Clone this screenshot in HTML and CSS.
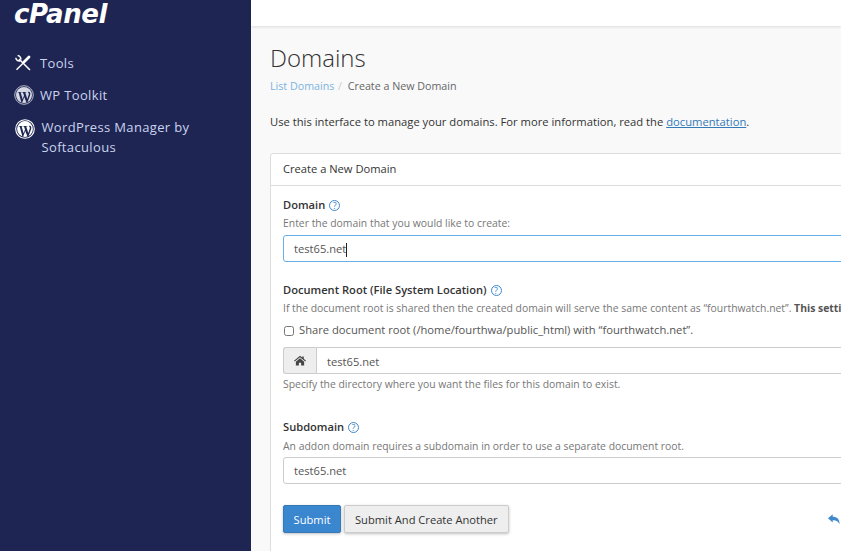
FILE: index.html
```html
<!DOCTYPE html>
<html lang="en">

<head>
    <meta charset="UTF-8">
    <meta name="viewport" content="width=device-width, initial-scale=1.0">
    <title>Domains</title>
    <link rel="stylesheet" href="styles.css">
</head>

<body>

    <aside class="sidebar">
        <div class="logo">cPanel</div>
        <nav class="sideNav">
            <a class="navItem toolsItem" href="#">
                <svg class="navIcon" viewBox="0 0 18 18" width="18" height="18">
                    <path d="M5 5 L16 16" fill="none" stroke="#fff" stroke-width="1.500"/>
                    <path d="M1.800 3.800 A3.400 3.400 0 0 0 6.200 6.800 M3.600 1.600 A3.400 3.400 0 0 1 6.800 5.600" fill="none" stroke="#fff" stroke-width="1.500"/>
                    <path d="M2.500 15.800 L10 8.300" fill="none" stroke="#fff" stroke-width="1.500"/>
                    <path d="M10 8 L15 3" fill="none" stroke="#fff" stroke-width="2.800" stroke-linecap="round"/>
                </svg>
                <span>Tools</span>
            </a>
            <a class="navItem" href="#">
                <svg class="navIcon" viewBox="0 0 20 20" width="20" height="20">
                    <circle cx="10" cy="10" r="9.300" fill="none" stroke="#b9bccb" stroke-width="1"/>
                    <circle cx="10" cy="10" r="8" fill="#d5d7e2"/>
                    <path d="M3.800 7 H7.500 V7.600 H6.600 L8.700 14.200 L10 10.400 L9 7.600 H8.300 V7 H12.300 V7.600 H11.200 L13.300 14 L14.800 9.600 C15.200 8.400 14.300 8 14 7 C14.200 6.500 15 6.600 15.600 7 C16.500 7.800 16.500 9 16 10.500 L13.200 18 H12.600 L10.300 12 L8 18 H7.500 L4.700 7.600 H3.800 Z" fill="#1f2553"/>
                </svg>
                <span>WP Toolkit</span>
            </a>
            <a class="navItem navItemTall" href="#">
                <svg class="navIcon" viewBox="0 0 20 20" width="20" height="20">
                    <circle cx="10" cy="10" r="9.300" fill="none" stroke="#fff" stroke-width="1.100"/>
                    <circle cx="10" cy="10" r="7.900" fill="#fff"/>
                    <path d="M3.800 7 H7.500 V7.600 H6.600 L8.700 14.200 L10 10.400 L9 7.600 H8.300 V7 H12.300 V7.600 H11.200 L13.300 14 L14.800 9.600 C15.200 8.400 14.300 8 14 7 C14.200 6.500 15 6.600 15.600 7 C16.500 7.800 16.500 9 16 10.500 L13.200 18 H12.600 L10.300 12 L8 18 H7.500 L4.700 7.600 H3.800 Z" fill="#1f2553"/>
                </svg>
                <span>WordPress Manager by Softaculous</span>
            </a>
        </nav>
    </aside>

    <div class="main">
        <header class="topBar"></header>

        <div class="content">
            <h1>Domains</h1>
            <div class="crumbs">
                <a href="#">List Domains</a>
                <span class="sep">/</span>
                <span>Create a New Domain</span>
            </div>

            <p class="intro">Use this interface to manage your domains. For more information, read the <a href="#">documentation</a>.</p>

            <section class="card">
                <div class="cardHead">Create a New Domain</div>
                <div class="cardBody">

                    <div class="field">
                        <label class="fieldLabel">Domain <span class="help">?</span></label>
                        <p class="hint">Enter the domain that you would like to create:</p>
                        <div class="textBox focused">test65.net<span class="caret"></span></div>
                    </div>

                    <div class="field rootField">
                        <label class="fieldLabel">Document Root (File System Location) <span class="help">?</span></label>
                        <p class="hint nowrap">If the document root is shared then the created domain will serve the same content as “fourthwatch.net”. <b>This setting cannot be changed</b></p>
                        <label class="shareRow">
                            <input type="checkbox">
                            <span>Share document root (/home/fourthwa/public_html) with “fourthwatch.net”.</span>
                        </label>
                        <div class="inputGroup">
                            <span class="addon">
                                <svg viewBox="0 0 16 14" width="12" height="11">
                                    <path d="M8 0.500 L11 3 V1.500 H13 V4.700 L16 7.300 L15 8.400 L8 2.500 L1 8.400 L0 7.300 Z M2.500 8.500 L8 4 L13.500 8.500 V13.500 H9.500 V10 H6.500 V13.500 H2.500 Z" fill="#444"/>
                                </svg>
                            </span>
                            <div class="textBox groupBox">test65.net</div>
                        </div>
                        <p class="hint afterBox">Specify the directory where you want the files for this domain to exist.</p>
                    </div>

                    <div class="field subField">
                        <label class="fieldLabel">Subdomain <span class="help">?</span></label>
                        <p class="hint">An addon domain requires a subdomain in order to use a separate document root.</p>
                        <div class="textBox">test65.net</div>
                    </div>

                    <div class="actions">
                        <button class="btn primary">Submit</button>
                        <button class="btn">Submit And Create Another</button>
                        <svg class="backIcon" viewBox="0 0 14 12" width="12" height="11">
                            <path d="M0 4.500 L5.500 0 V2.800 C10.500 2.800 13.500 5 13.500 11.500 C12 8 10 6.800 5.500 6.800 V9.500 Z" fill="#3f88cc"/>
                        </svg>
                    </div>

                </div>
            </section>
        </div>
    </div>

</body>

</html>
```

FILE: styles.css
```css
* {
    margin: 0;
    padding: 0;
    box-sizing: border-box;
}

html,
body {
    height: 100%;
    overflow: hidden;
}

body {
    display: flex;
    font-family: "Open Sans", sans-serif;
    font-size: 11.150px;
    color: #333;
    background: #f9f9f9;
}

a {
    text-decoration: none;
}

/* sidebar */
.sidebar {
    width: 251px;
    flex-shrink: 0;
    background: #1f2553;
    padding: 0 14px;
}

.logo {
    height: 47px;
    font-family: "DejaVu Sans", sans-serif;
    font-size: 26px;
    font-weight: 700;
    font-style: italic;
    line-height: 28px;
    letter-spacing: -0.400px;
    color: #fff;
}

.sideNav {
    display: flex;
    flex-direction: column;
}

.navItem {
    display: flex;
    align-items: center;
    gap: 6px;
    height: 32px;
    font-size: 13px;
    letter-spacing: 0.350px;
    color: #c9d4ee;
}

.toolsItem {
    gap: 8px;
}

.navItemTall {
    height: auto;
    align-items: flex-start;
    gap: 6.500px;
    padding: 6px 0 0 1px;
    line-height: 20px;
}

.navItemTall .navIcon {
    margin-top: 2px;
}

.navIcon {
    flex-shrink: 0;
}

/* main column */
.main {
    flex: 1;
    min-width: 0;
}

.topBar {
    height: 26px;
    background: #fff;
    box-shadow: 0 1px 3px rgba(0, 0, 0, 0.12);
}

.content {
    padding-left: 19px;
}

h1 {
    margin-top: 17px;
    font-size: 24px;
    font-weight: 300;
    line-height: 30px;
    color: #333;
}

.crumbs {
    margin-top: 6px;
    font-size: 10.700px;
    line-height: 15px;
    color: #666;
}

.crumbs a {
    color: #7cb3e0;
}

.crumbs .sep {
    margin: 0 3px 0 1px;
    color: #ccc;
}

.intro {
    margin-top: 20px;
    line-height: 15px;
    font-size: 11.220px;
}

.intro a {
    color: #337ab7;
    text-decoration: underline;
}

/* card runs past the window on the right and the bottom */
.card {
    width: 760px;
    margin-top: 24px;
    background: #fff;
    border: 1px solid #ddd;
    border-radius: 3px;
}

.cardHead {
    height: 32px;
    padding: 0 12px;
    line-height: 29px;
    border-bottom: 1px solid #ddd;
}

.cardBody {
    padding: 12px 12px 40px;
}

.fieldLabel {
    display: block;
    font-weight: 600;
    line-height: 14px;
}

.help {
    display: inline-block;
    width: 11px;
    height: 11px;
    border: 1px solid #3f88cc;
    border-radius: 50%;
    margin-left: 1px;
    font-size: 9px;
    font-weight: 400;
    line-height: 9px;
    text-align: center;
    color: #3f88cc;
}

.hint {
    margin-top: 4px;
    font-size: 10.400px;
    line-height: 14px;
    color: #777;
}

.nowrap {
    white-space: nowrap;
}

.hint b {
    color: #555;
}

.textBox {
    height: 27px;
    margin-top: 5px;
    padding: 0 10px;
    border: 1px solid #ccc;
    border-radius: 3px;
    background: #fff;
    line-height: 25px;
    color: #555;
}

.focused {
    border-color: #66afe9;
}

.caret {
    display: inline-block;
    width: 1px;
    height: 14px;
    background: #222;
    vertical-align: middle;
}

.rootField {
    margin-top: 21px;
}

.shareRow {
    display: flex;
    align-items: center;
    gap: 5px;
    margin-top: 7px;
    line-height: 16px;
    font-size: 11.200px;
    color: #555;
}

.shareRow input {
    width: 10px;
    height: 10px;
    margin: 2px 0 0 1px;
}

.inputGroup {
    display: flex;
    margin-top: 9px;
}

.addon {
    display: flex;
    align-items: center;
    justify-content: center;
    width: 33px;
    height: 27px;
    background: #eee;
    border: 1px solid #ccc;
    border-right: 0;
    border-radius: 3px 0 0 3px;
}

.groupBox {
    flex: 1;
    margin-top: 0;
    border-radius: 0 3px 3px 0;
    line-height: 27px;
}

.afterBox {
    margin-top: 3px;
}

.subField {
    margin-top: 29px;
}

.subField .hint {
    margin-top: 5px;
}

.subField .textBox {
    margin-top: 4px;
}

.actions {
    display: flex;
    align-items: center;
    gap: 3px;
    margin-top: 21px;
}

.btn {
    height: 28px;
    padding: 0 10px;
    border: 1px solid #ccc;
    border-radius: 2px;
    background: #eee;
    font-family: inherit;
    font-size: 11.150px;
    color: #333;
    box-shadow: 0 1px 3px rgba(0, 0, 0, 0.25);
}

.primary {
    width: 58px;
    padding: 0;
    background: #3a86cf;
    border-color: #337ab7;
    color: #fff;
}

.backIcon {
    margin-left: 316px;
}
```
